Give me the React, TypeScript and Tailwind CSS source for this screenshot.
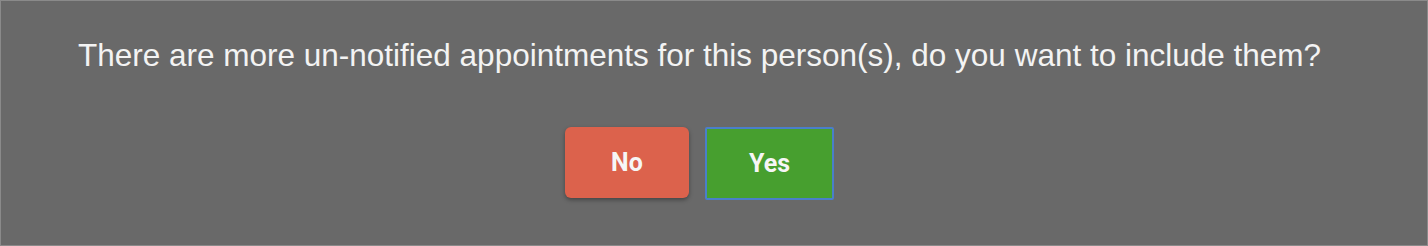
export default function App() {
  return (
    <div className="h-[246px] w-[1428px] border border-[#8a8a8a] bg-[#696969] pr-[29px] font-['Liberation_Sans',Arial,sans-serif]">
      <div className="flex flex-col items-center pt-[35px]">
        <p className="whitespace-nowrap text-[31.5px] leading-[38px] text-[#f3f3f3]">
          There are more un-notified appointments for this person(s), do you
          want to include them?
        </p>
        <div className="mt-[53px] flex gap-[16px] font-['Roboto',sans-serif] text-[25px] font-bold text-[#f6f6f6]">
          <button className="h-[71px] w-[124px] rounded-[6px] bg-[#dc624c] shadow-[0_2px_4px_rgba(0,0,0,0.35)]">
            No
          </button>
          <button className="h-[73px] w-[129px] rounded-[2px] border-2 border-[#4a7fc9] bg-[#479f2f]">
            Yes
          </button>
        </div>
      </div>
    </div>
  );
}
